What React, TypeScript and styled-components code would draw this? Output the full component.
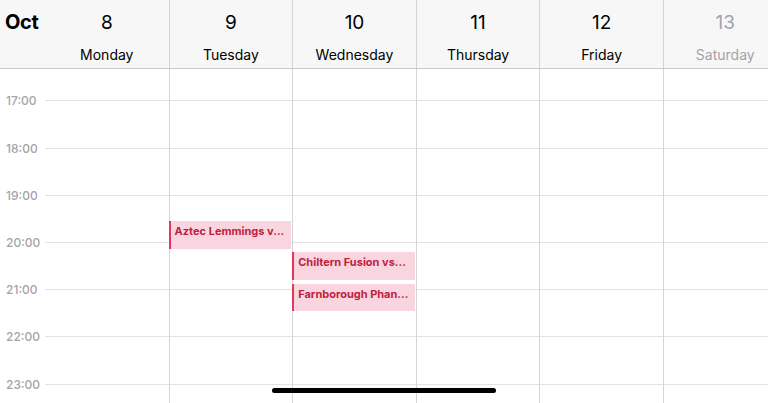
import React from 'react';
import styled, { createGlobalStyle } from 'styled-components';

const HOUR = 47.2;
const GUTTER = 45;
const COL = 123.6;

type CalEvent = { day: number; start: number; duration: number; title: string };

const days = [
  { num: 8, name: 'Monday' },
  { num: 9, name: 'Tuesday' },
  { num: 10, name: 'Wednesday' },
  { num: 11, name: 'Thursday' },
  { num: 12, name: 'Friday' },
  { num: 13, name: 'Saturday', muted: true },
];

const hours = [17, 18, 19, 20, 21, 22, 23];

// start in minutes after 17:00
const events: CalEvent[] = [
  { day: 1, start: 152, duration: 36, title: 'Aztec Lemmings v...' },
  { day: 2, start: 192, duration: 35, title: 'Chiltern Fusion vs...' },
  { day: 2, start: 232, duration: 35, title: 'Farnborough Phan...' },
];

const TOP_OFFSET = 32; // body top to 17:00 line

const App: React.FC = () => {
  return (
    <Screen>
      <GlobalStyle />
      <Header>
        <MonthCell>Oct</MonthCell>
        {days.map((d) => (
          <DayHead key={d.num} $muted={d.muted}>
            <DayNum>{d.num}</DayNum>
            <DayName>{d.name}</DayName>
          </DayHead>
        ))}
      </Header>
      <Body>
        <HourLayer>
          {hours.map((h) => (
            <HourRow key={h}>
              <HourLabel>{h}:00</HourLabel>
              <HourLine />
            </HourRow>
          ))}
        </HourLayer>
        <ColumnLayer>
          <div />
          {days.map((d, i) => (
            <DayColumn key={d.num} $first={i === 0}>
              {events
                .filter((e) => e.day === i)
                .map((e) => (
                  <EventBlock
                    key={e.title}
                    style={{
                      top: TOP_OFFSET + (e.start / 60) * HOUR,
                      height: (e.duration / 60) * HOUR,
                    }}
                  >
                    <EventTitle>{e.title}</EventTitle>
                  </EventBlock>
                ))}
            </DayColumn>
          ))}
        </ColumnLayer>
      </Body>
      <HomeIndicator />
    </Screen>
  );
};

const GlobalStyle = createGlobalStyle`
  html, body {
    margin: 0;
    padding: 0;
    background: #fff;
    overflow: hidden;
  }
  body {
    font-family: Inter, 'Noto Sans', 'Liberation Sans', sans-serif;
    -webkit-font-smoothing: antialiased;
  }
`;

const Screen = styled.div`
  position: relative;
  width: 768px;
  height: 403px;
  overflow: hidden;
  background: #fff;
`;

const Header = styled.div`
  display: grid;
  grid-template-columns: ${GUTTER}px repeat(6, ${COL}px);
  width: ${GUTTER + COL * 6}px;
  height: 68px;
  background: #f7f7f7;
  border-bottom: 1px solid #c9c9cc;
`;

const MonthCell = styled.div`
  font-size: 20px;
  font-weight: 700;
  color: #000;
  padding: 10px 0 0 5px;
  letter-spacing: -0.3px;
`;

const DayHead = styled.div<{ $muted?: boolean }>`
  display: flex;
  flex-direction: column;
  align-items: center;
  color: ${(p) => (p.$muted ? '#a3a3a8' : '#000')};
  & + & {
    border-left: 1px solid #d4d4d7;
  }
`;

const DayNum = styled.div`
  font-size: 19px;
  font-weight: 400;
  margin-top: 11px;
  line-height: 24px;
`;

const DayName = styled.div`
  font-size: 14px;
  margin-top: 11px;
  line-height: 18px;
`;

const Body = styled.div`
  display: grid;
  width: ${GUTTER + COL * 6}px;
  height: 340px;
  & > * {
    grid-area: 1 / 1;
  }
`;

const HourLayer = styled.div`
  display: flex;
  flex-direction: column;
  padding-top: ${TOP_OFFSET - HOUR / 2}px;
`;

const HourRow = styled.div`
  display: flex;
  align-items: center;
  height: ${HOUR}px;
  flex-shrink: 0;
`;

const HourLabel = styled.div`
  width: ${GUTTER}px;
  box-sizing: border-box;
  padding-left: 6px;
  font-size: 12px;
  font-weight: 500;
  color: #a4a4a9;
`;

const HourLine = styled.div`
  flex: 1;
  height: 1px;
  background: #e3e3e6;
`;

const ColumnLayer = styled.div`
  display: grid;
  grid-template-columns: ${GUTTER}px repeat(6, ${COL}px);
`;

const DayColumn = styled.div<{ $first?: boolean }>`
  position: relative;
  border-left: ${(p) => (p.$first ? 'none' : '1px solid #d4d4d7')};
`;

const EventBlock = styled.div`
  position: absolute;
  left: -1px;
  right: 1px;
  box-sizing: border-box;
  background: #f9d5df;
  border-left: 2px solid #e2355f;
  padding: 3px 4px 0 4px;
`;

const EventTitle = styled.div`
  font-size: 11px;
  font-weight: 700;
  color: #c0203e;
  white-space: nowrap;
  line-height: 14px;
`;

const HomeIndicator = styled.div`
  position: absolute;
  left: 50%;
  bottom: 10px;
  width: 224px;
  height: 5px;
  margin-left: -112px;
  border-radius: 3px;
  background: #000;
`;

export default App;
